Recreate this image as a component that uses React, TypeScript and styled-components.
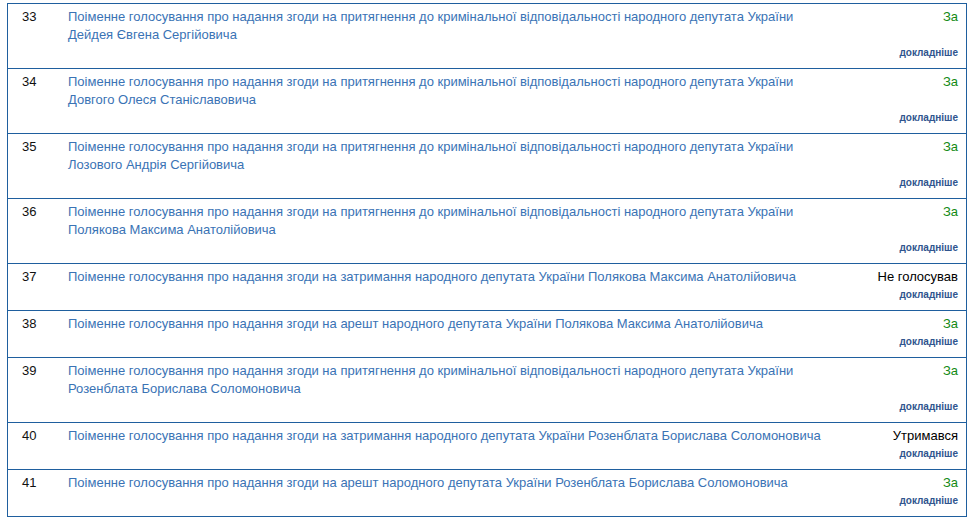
import React from "react";
import styled, { createGlobalStyle } from "styled-components";

const GlobalStyle = createGlobalStyle`
  html, body {
    margin: 0;
    padding: 0;
    background: #ffffff;
  }
  body {
    font-family: "Liberation Sans", Arial, sans-serif;
  }
`;

const Page = styled.div`
  padding: 3px 0 0 7px;
`;

const Table = styled.div`
  width: 960px;
  box-sizing: border-box;
  border-top: 1px solid #1f5f9e;
  border-left: 1px solid #1f5f9e;
  border-right: 1px solid #1f5f9e;
`;

const Row = styled.div`
  display: grid;
  grid-template-columns: 60px 1fr 124px;
  border-bottom: 1px solid #1f5f9e;
`;

const Num = styled.div`
  padding: 4px 0 0 14px;
  font-size: 13px;
  line-height: 18px;
  color: #111111;
`;

const Title = styled.a`
  display: block;
  padding: 4px 10px 24px 0;
  font-size: 13px;
  line-height: 18px;
  color: #3a73b5;
  text-decoration: none;
`;

const VoteCell = styled.div`
  display: flex;
  flex-direction: column;
  justify-content: space-between;
  align-items: flex-end;
  padding: 4px 8px 8px 0;
`;

const Vote = styled.div<{ $kind: "yes" | "other" }>`
  font-size: 13px;
  line-height: 18px;
  color: ${(p) => (p.$kind === "yes" ? "#138a13" : "#000000")};
`;

const More = styled.a`
  font-size: 10px;
  line-height: 14px;
  font-weight: bold;
  color: #30558e;
  text-decoration: none;
`;

const P = "Поіменне голосування про надання згоди на ";

const rows: { n: number; title: string; vote: string }[] = [
  { n: 33, title: P + "притягнення до кримінальної відповідальності народного депутата України Дейдея Євгена Сергійовича", vote: "За" },
  { n: 34, title: P + "притягнення до кримінальної відповідальності народного депутата України Довгого Олеся Станіславовича", vote: "За" },
  { n: 35, title: P + "притягнення до кримінальної відповідальності народного депутата України Лозового Андрія Сергійовича", vote: "За" },
  { n: 36, title: P + "притягнення до кримінальної відповідальності народного депутата України Полякова Максима Анатолійовича", vote: "За" },
  { n: 37, title: P + "затримання народного депутата України Полякова Максима Анатолійовича", vote: "Не голосував" },
  { n: 38, title: P + "арешт народного депутата України Полякова Максима Анатолійовича", vote: "За" },
  { n: 39, title: P + "притягнення до кримінальної відповідальності народного депутата України Розенблата Борислава Соломоновича", vote: "За" },
  { n: 40, title: P + "затримання народного депутата України Розенблата Борислава Соломоновича", vote: "Утримався" },
  { n: 41, title: P + "арешт народного депутата України Розенблата Борислава Соломоновича", vote: "За" },
];

export default function App() {
  return (
    <>
      <GlobalStyle />
      <Page>
        <Table>
          {rows.map((r) => (
            <Row key={r.n}>
              <Num>{r.n}</Num>
              <Title href="#">{r.title}</Title>
              <VoteCell>
                <Vote $kind={r.vote === "За" ? "yes" : "other"}>{r.vote}</Vote>
                <More href="#">докладніше</More>
              </VoteCell>
            </Row>
          ))}
        </Table>
      </Page>
    </>
  );
}
